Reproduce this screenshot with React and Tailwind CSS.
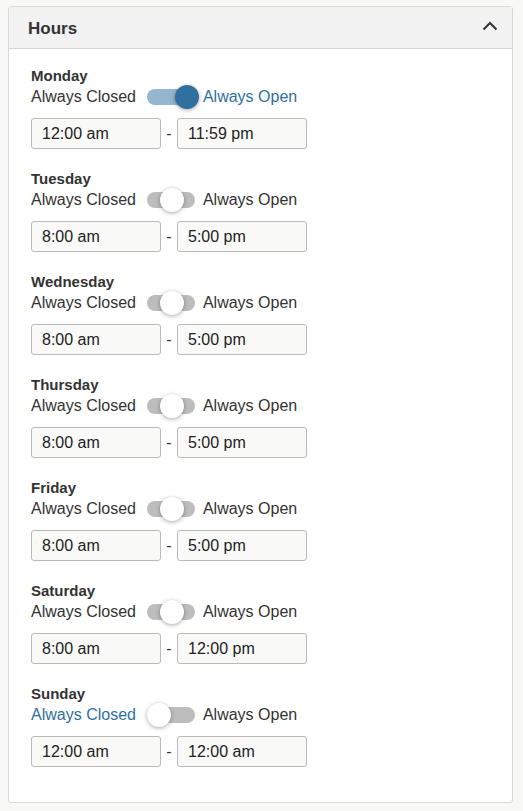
import React from "react";

const days = [
  { name: "Monday", state: "open", from: "12:00 am", to: "11:59 pm" },
  { name: "Tuesday", state: "mixed", from: "8:00 am", to: "5:00 pm" },
  { name: "Wednesday", state: "mixed", from: "8:00 am", to: "5:00 pm" },
  { name: "Thursday", state: "mixed", from: "8:00 am", to: "5:00 pm" },
  { name: "Friday", state: "mixed", from: "8:00 am", to: "5:00 pm" },
  { name: "Saturday", state: "mixed", from: "8:00 am", to: "12:00 pm" },
  { name: "Sunday", state: "closed", from: "12:00 am", to: "12:00 am" },
];

// three-way toggle: closed / mixed / open
function Toggle({ state }) {
  const track = state === "open" ? "bg-[#94b7cf]" : "bg-[#bdbdbd]";
  let thumb = "left-[13px] bg-white";
  if (state === "open") thumb = "left-[28px] bg-[#31709e]";
  if (state === "closed") thumb = "left-0 bg-white";
  return (
    <div className={`relative w-[48px] h-[16px] rounded-full ${track}`}>
      <div
        className={`absolute top-[-4px] w-[24px] h-[24px] rounded-full shadow-[0_1px_4px_rgba(0,0,0,0.35)] ${thumb}`}
      />
    </div>
  );
}

function TimeInput({ value }) {
  return (
    <div className="w-[130px] h-[31px] flex items-center pl-[10px] border border-[#b9b9b9] rounded-[3px] bg-[#f9f9f8] text-[16px] text-[#222]">
      {value}
    </div>
  );
}

function Day({ day }) {
  const closedColor = day.state === "closed" ? "text-[#2f6fa0]" : "text-[#333]";
  const openColor = day.state === "open" ? "text-[#2f6fa0]" : "text-[#333]";
  return (
    <div className="mb-[20px]">
      <div className="h-[20px] leading-[20px] text-[15px] font-bold text-[#333]">{day.name}</div>
      <div className="h-[22px] flex items-center text-[16px]">
        <span className={closedColor}>Always Closed</span>
        <div className="ml-[11px] mr-[8px]">
          <Toggle state={day.state} />
        </div>
        <span className={openColor}>Always Open</span>
      </div>
      <div className="mt-[10px] flex items-center">
        <TimeInput value={day.from} />
        <span className="w-[16px] text-center text-[16px] text-[#333]">-</span>
        <TimeInput value={day.to} />
      </div>
    </div>
  );
}

export default function App() {
  return (
    <div
      className="min-h-[811px] bg-[#f8f8f7] pt-[6px] pl-[8px] pr-[10px]"
      style={{ fontFamily: '"Liberation Sans", Arial, sans-serif' }}
    >
      <div className="border border-[#d9d9d9] rounded-[3px] bg-white">
        <div className="h-[42px] flex items-center justify-between pl-[19px] pr-[14px] bg-[#f2f2f2] border-b border-[#d4d4d4]">
          <span className="text-[17px] font-bold text-[#333] mt-[2px]">Hours</span>
          <svg width="16" height="10" viewBox="0 0 16 10" className="mt-[-4px]">
            <polyline points="1.5,8.5 8,2 14.5,8.5" fill="none" stroke="#333" strokeWidth="2" />
          </svg>
        </div>
        <div className="pl-[22px] pt-[17px] pb-[15px]">
          {days.map((d) => (
            <Day key={d.name} day={d} />
          ))}
        </div>
      </div>
    </div>
  );
}
